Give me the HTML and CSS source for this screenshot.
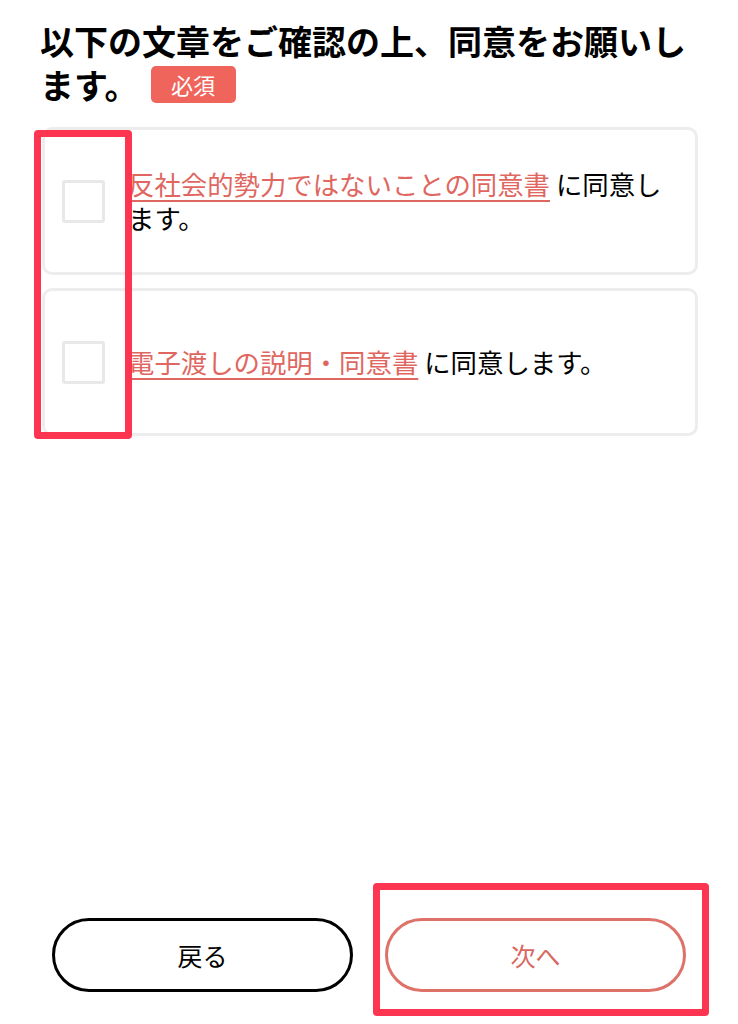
FILE: index.html
```html
<!DOCTYPE html>
<html lang="ja">
<head>
  <meta charset="UTF-8">
  <meta name="viewport" content="width=device-width, initial-scale=1.0">
  <title>同意確認</title>
  <link rel="stylesheet" href="styles.css">
</head>
<body>
  <div class="page">
    <h1 class="title">以下の文章をご確認の上、同意をお願いします。<span class="badge">必須</span></h1>

    <div class="agree-list">
      <label class="agree-card">
        <span class="check"></span>
        <span class="agree-text"><a href="#" class="doc-link">反社会的勢力ではないことの同意書</a> に同意します。</span>
      </label>
      <label class="agree-card">
        <span class="check"></span>
        <span class="agree-text"><a href="#" class="doc-link">電子渡しの説明・同意書</a> に同意します。</span>
      </label>
    </div>

    <div class="actions">
      <button class="btn btn-back">戻る</button>
      <button class="btn btn-next">次へ</button>
    </div>

    <!-- annotation marks from the screenshot -->
    <div class="mark mark-checks"></div>
    <div class="mark mark-next"></div>
  </div>
</body>
</html>
```

FILE: styles.css
```css
/* Base */
* {
  box-sizing: border-box;
}
body {
  margin: 0;
  font-family: "Noto Sans CJK JP", "Noto Sans", sans-serif;
  background: #fff;
  color: #111;
}
.page {
  position: relative;
  min-height: 1024px;
  display: flex;
  flex-direction: column;
  padding: 19px 0 32px;
}
.title {
  margin: 0;
  padding: 0 36px 0 40px;
  font-size: 34px;
  line-height: 44px;
  font-weight: 700;
  color: #000;
}
.badge {
  display: inline-block;
  vertical-align: 5px;
  margin-left: 12px;
  width: 85px;
  height: 37px;
  line-height: 37px;
  border-radius: 5px;
  background: #ef645b;
  color: #fff;
  font-size: 22px;
  font-weight: 400;
  text-align: center;
}

/* Agreement cards */
.agree-list {
  display: flex;
  flex-direction: column;
  gap: 13px;
  margin: 20px 40px 0 42px;
}
.agree-card {
  display: flex;
  align-items: center;
  gap: 23px;
  min-height: 148px;
  padding: 20px 20px 20px 17px;
  border: 3px solid #ededed;
  border-radius: 10px;
}
.check {
  flex: none;
  width: 43px;
  height: 43px;
  border: 3px solid #e8e8e8;
  border-radius: 3px;
  background: #fff;
}
.agree-text {
  font-size: 26.4px;
  line-height: 34px;
  color: #000;
}
.doc-link {
  color: #e0675f;
  text-decoration: underline;
  text-decoration-thickness: 2px;
  text-underline-offset: 5px;
}

/* Buttons */
.actions {
  margin-top: auto;
  display: flex;
  justify-content: center;
  gap: 32px;
}
.btn {
  width: 301px;
  height: 74px;
  border-radius: 37px;
  background: #fff;
  font-family: inherit;
  font-size: 25px;
  cursor: pointer;
}
.btn-back {
  border: 3px solid #000;
  color: #000;
}
.btn-next {
  border: 3px solid #de7269;
  color: #d9685f;
}

/* Red highlight frames */
.mark {
  position: absolute;
  border: 7px solid #fd3550;
  border-radius: 4px;
  pointer-events: none;
}
.mark-checks {
  left: 34px;
  top: 130px;
  width: 98px;
  height: 309px;
}
.mark-next {
  left: 373px;
  top: 883px;
  width: 336px;
  height: 133px;
}
```
